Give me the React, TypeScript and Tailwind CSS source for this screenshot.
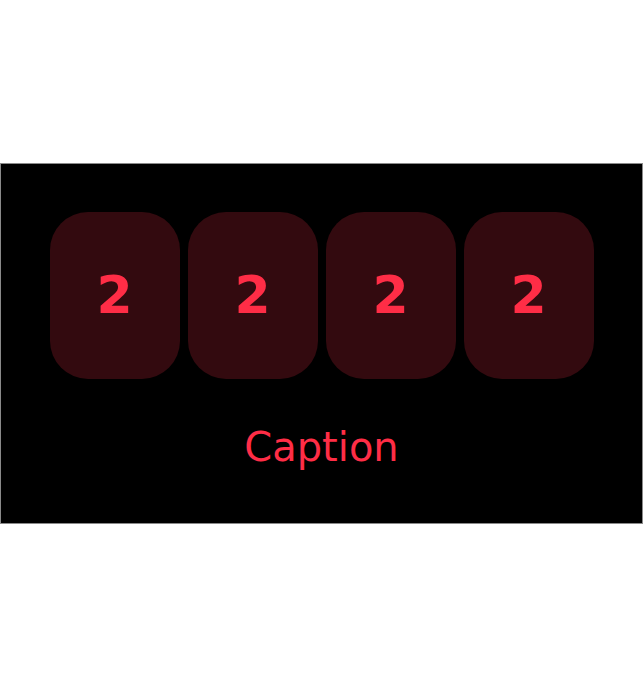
const digits = ['2', '2', '2', '2']

export const App = (): JSX.Element => (
  <div className="flex min-h-screen items-center bg-white">
    <div className="flex h-[361px] w-full flex-col items-center border border-[#8a8a8a] bg-black pt-[48px]">
      <div className="flex gap-[8px]">
        {digits.map((d, i) => (
          <div
            key={i}
            className="flex h-[167px] w-[130px] items-center justify-center rounded-[38px] bg-[#330a0f]"
          >
            <span className="font-['DejaVu_Sans',sans-serif] text-[52px] font-bold leading-none text-[#ff2d46]">
              {d}
            </span>
          </div>
        ))}
      </div>
      <p className="mt-[48px] font-['DejaVu_Sans',sans-serif] text-[40px] leading-none text-[#ff2d46]">
        Caption
      </p>
    </div>
  </div>
)

export default App
